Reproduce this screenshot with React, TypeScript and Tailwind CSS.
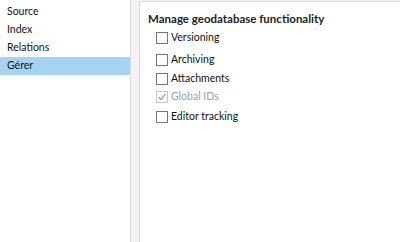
import React from "react";

const items = ["Source", "Index", "Relations", "Gérer"];

function Box({ checked, disabled }: { checked?: boolean; disabled?: boolean }) {
  return (
    <span
      className={`flex h-[12px] w-[12px] shrink-0 items-center justify-center border bg-white ${
        disabled ? "border-[#c4c4c4]" : "border-[#767676]"
      }`}
    >
      {checked && (
        <svg width="10" height="10" viewBox="0 0 10 10">
          <path d="M1.5 5 L4 7.5 L8.5 2" fill="none" stroke="#a0a0a0" strokeWidth="1.2" />
        </svg>
      )}
    </span>
  );
}

export default function App() {
  const opts = [
    { label: "Versioning", mt: "mt-[5px]" },
    { label: "Archiving", mt: "mt-[10px]" },
    { label: "Attachments", mt: "mt-[7px]" },
    { label: "Global IDs", mt: "mt-[6px]", checked: true, disabled: true },
    { label: "Editor tracking", mt: "mt-[8px]" },
  ];
  return (
    <div
      className="flex h-[242px] w-[400px] bg-[#f3f3f3] text-[10.5px] text-[#111111]"
      style={{ fontFamily: 'Lato, "Noto Sans", sans-serif' }}
    >
      <div className="w-[131px] border-r border-[#dadada] bg-white pt-[3px]">
        {items.map((it, i) => (
          <div
            key={it}
            className={`flex h-[18px] items-center pl-[7px] text-[10.5px] ${i === 3 ? "bg-[#a6d3f2]" : ""}`}
          >
            {it}
          </div>
        ))}
      </div>
      <div className="ml-[8px] mt-[1px] flex-1 border-l border-t border-[#dadada] bg-white pl-[8px] pt-[9px]">
        <div className="text-[11.5px] font-bold leading-[16px] text-[#222222]">
          Manage geodatabase functionality
        </div>
        <div className="flex flex-col pl-[8px]">
          {opts.map((o) => (
            <div key={o.label} className={`flex h-[12px] items-center gap-[3px] ${o.mt}`}>
              <Box checked={o.checked} disabled={o.disabled} />
              <span className={o.disabled ? "text-[#a0a0a0]" : ""}>{o.label}</span>
            </div>
          ))}
        </div>
      </div>
    </div>
  );
}
